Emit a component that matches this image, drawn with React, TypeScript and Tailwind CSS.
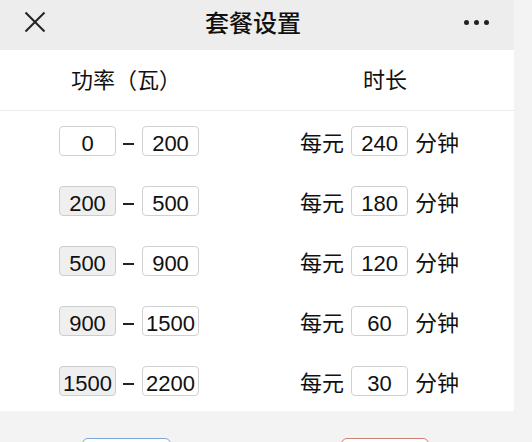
import React from "react";

const cjk = { fontFamily: '"PingFang SC","Noto Sans CJK SC","Noto Sans",sans-serif' };
const num = { fontFamily: '"Liberation Sans",Arial,sans-serif' };

function Box({ v, gray }: { v: string; gray?: boolean }) {
  return (
    <div
      className={`w-[57px] h-[30px] shrink-0 rounded-[4px] border flex justify-center overflow-visible whitespace-nowrap text-[22px] leading-[22px] pt-[6px] text-[#111] ${
        gray ? "bg-[#efefef] border-[#cdcdcd]" : "bg-white border-[#d0d0d0]"
      }`}
      style={num}
    >
      {v}
    </div>
  );
}

const rows = [
  ["0", "200", "240"],
  ["200", "500", "180"],
  ["500", "900", "120"],
  ["900", "1500", "60"],
  ["1500", "2200", "30"],
];

export default function App() {
  return (
    <div className="w-[532px] h-[442px] bg-[#f3f3f3] flex overflow-hidden">
      <div className="w-[514px] shrink-0 flex flex-col">
        <div className="h-[50px] shrink-0 bg-[#ededed] flex items-center pl-[24px] pr-[24px] pb-[6px]">
          <svg width="22" height="22" viewBox="0 0 22 22" className="shrink-0">
            <path d="M1.5 1.5 L20.5 20.5 M20.5 1.5 L1.5 20.5" stroke="#222" strokeWidth="2" fill="none" />
          </svg>
          <div className="ml-[159px] text-[24px] leading-[30px] text-[#111] font-medium" style={cjk}>
            套餐设置
          </div>
          <div className="ml-auto flex gap-[5px] mr-[1px]">
            <div className="w-[5px] h-[5px] rounded-full bg-[#222]" />
            <div className="w-[5px] h-[5px] rounded-full bg-[#222]" />
            <div className="w-[5px] h-[5px] rounded-full bg-[#222]" />
          </div>
        </div>
        <div className="bg-white shrink-0">
          <div className="h-[61px] border-b border-[#ebebeb] flex items-center text-[22px] text-[#111] pb-[3px]" style={cjk}>
            <div className="w-[291px] pl-[71px]">功率（瓦）</div>
            <div className="pl-[72px]">时长</div>
          </div>
          {rows.map((r, i) => (
            <div key={i} className="h-[60px] flex items-center">
              <div className="w-[300px] pl-[59px] flex items-center">
                <Box v={r[0]} gray={i > 0} />
                <div className="w-[11px] h-[2px] bg-[#222] ml-[7px] mr-[8px] mt-[6px]" />
                <Box v={r[1]} />
              </div>
              <div className="flex items-center text-[22px] text-[#111]" style={cjk}>
                <span>每元</span>
                <div className="mx-[7px]">
                  <Box v={r[2]} />
                </div>
                <span>分钟</span>
              </div>
            </div>
          ))}
        </div>
        <div className="flex-1 flex pt-[27px]">
          <div className="ml-[82px] w-[89px] h-[40px] shrink-0 rounded-[6px] border border-[#7ba6de] bg-white" />
          <div className="ml-[170px] w-[88px] h-[40px] shrink-0 rounded-[6px] border border-[#cf7f72] bg-white" />
        </div>
      </div>
    </div>
  );
}
